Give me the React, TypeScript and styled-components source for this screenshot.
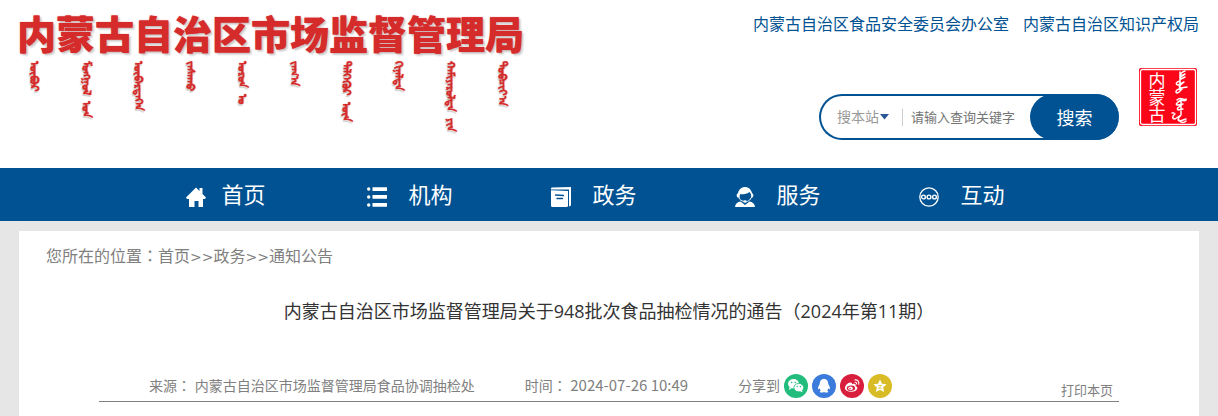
import React from "react";
import styled, { createGlobalStyle } from "styled-components";

const BLUE = "#005293";
const RED = "#d52b2b";

const GlobalStyle = createGlobalStyle`
  *, *::before, *::after { box-sizing: border-box; }
  body {
    margin: 0;
    background: #e6e6e6;
    font-family: "Open Sans", "Noto Sans CJK SC", sans-serif;
    font-size: 14px;
    color: #808080;
  }
  a { color: inherit; text-decoration: none; }
  h1, h2, p, ul { margin: 0; padding: 0; }
`;

const Header = styled.header`
  background: #fff;
`;

const Container = styled.div`
  max-width: 1180px;
  margin: 0 auto;
`;

const HeaderInner = styled(Container)`
  display: flex;
  justify-content: space-between;
  height: 168px;
`;

const Brand = styled.div`
  margin-left: -2px;
  padding-top: 12px;
`;

const BrandName = styled.h1`
  font-family: "Noto Sans CJK SC", sans-serif;
  font-size: 39px;
  line-height: 40px;
  font-weight: 900;
  color: ${RED};
  white-space: nowrap;
  text-shadow: 0 0 1px ${RED}, 2px 2px 2px rgba(0, 0, 0, 0.2);
`;

const MongolianName = styled.p`
  display: flex;
  gap: 32px;
  padding: 9px 0 0 8px;
  color: ${RED};
  font-size: 11px;
  line-height: 20px;
  font-weight: 700;
  text-shadow: 0 0 1px ${RED}, 2px 1px 1px rgba(0, 0, 0, 0.2);

  span { writing-mode: vertical-lr; white-space: pre; }
`;

const HeaderSide = styled.div`
  display: flex;
  flex-direction: column;
  align-items: flex-end;
  padding-top: 12px;
`;

const SiteLinks = styled.nav`
  display: flex;
  gap: 14px;
  font-size: 16px;
  line-height: 24px;
  color: ${BLUE};
`;

const SearchRow = styled.div`
  display: flex;
  align-items: flex-start;
  gap: 20px;
  padding: 32px 2px 0 0;
`;

const SearchForm = styled.form`
  display: flex;
  align-items: center;
  width: 300px;
  height: 46px;
  margin-top: 26px;
  padding-left: 16px;
  border: 2px solid ${BLUE};
  border-right: 0;
  border-radius: 23px;
  background: #fff;
`;

const Scope = styled.label`
  display: flex;
  align-items: center;
  width: 66px;
  flex: none;
  border-right: 1px solid #ccc;
  height: 17px;
`;

const ScopeSelect = styled.select`
  appearance: none;
  border: 0;
  padding: 0;
  background: none;
  color: #999;
  font-family: inherit;
  font-size: 14px;
  line-height: 20px;
  width: 43px;
`;

const Keyword = styled.input`
  flex: 1;
  min-width: 0;
  border: 0;
  padding: 0 0 0 8px;
  background: none;
  font-family: inherit;
  font-size: 13px;
  line-height: 20px;
  outline: none;

  &::placeholder { color: #757575; opacity: 1; }
`;

const SearchButton = styled.button`
  flex: none;
  width: 89px;
  height: 46px;
  border: 0;
  border-radius: 23px;
  background: ${BLUE};
  color: #fff;
  font-family: inherit;
  font-size: 18px;
`;

const Seal = styled.svg`
  display: block;
  flex: none;
`;

const SealText = styled.text`
  writing-mode: vertical-rl;
  font-family: "Noto Sans CJK SC", sans-serif;
  font-size: 17px;
  fill: #fff;
`;

const NavBar = styled.nav`
  background: ${BLUE};
`;

const NavList = styled.ul`
  display: flex;
  max-width: 1180px;
  margin: 0 auto;
  padding-left: 115px;
  list-style: none;
`;

const NavItem = styled.li`
  width: 184px;
`;

const NavLink = styled.a<{ $gap: number }>`
  display: flex;
  align-items: center;
  justify-content: center;
  gap: ${(p) => p.$gap}px;
  height: 53px;
  padding-bottom: 2px;
  color: #fff;
  font-size: 22px;
  line-height: 32px;

  svg { flex: none; margin-top: 6px; }
`;

const Card = styled.main`
  max-width: 1180px;
  min-height: 200px;
  margin: 10px auto 0;
  padding: 12px 80px 0;
  background: #fff;
`;

const Breadcrumb = styled.nav`
  margin-left: -53px;
  font-size: 16px;
  line-height: 24px;
`;

const Separator = styled.span`
  font-family: "DejaVu Sans", sans-serif;
  font-size: 14px;
`;

const Colon = styled.span`
  font-family: "Noto Sans CJK TC", sans-serif;
`;

const ArticleTitle = styled.h2`
  margin-top: 29px;
  font-size: 18px;
  line-height: 26px;
  font-weight: 400;
  color: #333;
  text-align: center;
`;

const MetaRow = styled.div`
  display: flex;
  align-items: center;
  height: 31px;
  margin-top: 47px;
  padding: 0 6px 0 50px;
  border-bottom: 1px solid #808080;
  line-height: 20px;
  white-space: nowrap;
`;

const MetaItem = styled.span`
  margin-right: 50px;
  padding-bottom: 2px;
`;

const PublishTime = styled.time`
  font-family: "Noto Sans CJK SC", sans-serif;
  font-size: 15px;
`;

const Share = styled.div`
  display: flex;
  align-items: center;
  gap: 4px;
`;

const ShareLink = styled.a`
  display: block;
  height: 24px;

  svg { display: block; }
`;

const PrintButton = styled.button`
  margin: 8px 0 0 auto;
  border: 0;
  padding: 0;
  background: none;
  color: inherit;
  font-family: inherit;
  font-size: 13px;
  line-height: 20px;
`;

const mongolianWords = [
  "ᠥᠪᠥᠷ",
  "ᠮᠣᠩᠭᠣᠯ  ᠤᠨ",
  "ᠥᠪᠡᠷᠲᠡᠭᠡᠨ",
  "ᠵᠠᠰᠠᠬᠤ",
  "ᠣᠷᠣᠨ  ᠤ",
  "ᠵᠠᠬ᠎ᠠ",
  "ᠳᠡᠯᠭᠡᠭᠦᠷ  ᠦᠨ",
  "ᠬᠢᠨᠠᠯᠲᠠ",
  "ᠬᠠᠮᠢᠶᠠᠷᠤᠯᠲᠠ  ᠶᠢᠨ",
  "ᠲᠣᠪᠴᠢᠶ᠎ᠠ",
];

const HomeIcon = () => (
  <svg width="20" height="20" viewBox="0 0 20 20" fill="#fff" aria-hidden="true">
    <path d="M10 0.5 13.500 4V1h3v6L20 10.500 19 12h-2v8h-4.500v-6h-4v6H3v-8H1L0 10.500Z" />
  </svg>
);

const ListIcon = () => (
  <svg width="20" height="20" viewBox="0 0 20 20" fill="#fff" aria-hidden="true">
    <circle cx="1.700" cy="2" r="1.700" />
    <circle cx="1.700" cy="10" r="1.700" />
    <circle cx="1.700" cy="18" r="1.700" />
    <path d="M5.500 0.300H20v3.700H5.500ZM5.500 8.100H20v3.700H5.500ZM5.500 16.100H20v3.700H5.500Z" />
  </svg>
);

const DocumentIcon = () => (
  <svg width="20" height="20" viewBox="0 0 20 20" aria-hidden="true">
    <path d="M1 .5 20 0v18.500l-2 1V2.500H0V1.500Q0 .5 1 .5Z" fill="#fff" />
    <path d="M0 3.200 17 4v14.500Q17 20 15.500 20H1.500Q0 20 0 18.500Z" fill="#fff" />
    <path d="M4.500 8l8 .5M6 11.500h5.500" stroke={BLUE} strokeWidth="1.300" strokeLinecap="round" />
  </svg>
);

const ServiceIcon = () => (
  <svg width="20" height="20" viewBox="0 0 20 20" aria-hidden="true">
    <path d="M2.500 10.500C1 9 1.500 7 3 6c1-4 4-6 7-6s6 2 7 6c1.500 1 2 3 .5 4.500L16 11c.5-2.500 0-4.500-1.500-6-3 2.200-6 2.500-9.500 2.300-.5 1.200-.4 2.500-.1 3.700Z" fill="#fff" />
    <path d="M4 11c1 2 2.500 3 4.500 3.200" fill="none" stroke="#fff" strokeWidth="1" />
    <path d="M16.300 10.500c-1 2.300-2.300 3.300-4 3.800" fill="none" stroke="#fff" strokeWidth="1" />
    <path d="M0 20c.3-3.500 2.500-5 5.500-5.500L10 18l4.500-3.500c3 .5 5.200 2 5.500 5.500Z" fill="#fff" />
    <ellipse cx="10" cy="14.500" rx="1.800" ry="1.200" fill="#fff" />
  </svg>
);

const InteractIcon = () => (
  <svg width="20" height="20" viewBox="0 0 20 20" fill="none" stroke="#fff" aria-hidden="true">
    <circle cx="10" cy="10" r="9.200" strokeWidth="1.300" />
    <circle cx="4.500" cy="10" r="1.900" strokeWidth="1.400" />
    <circle cx="10" cy="10" r="1.900" strokeWidth="1.400" />
    <circle cx="15.500" cy="10" r="1.900" strokeWidth="1.400" />
  </svg>
);

const navItems = [
  { label: "首页", icon: <HomeIcon />, gap: 15 },
  { label: "机构", icon: <ListIcon />, gap: 21 },
  { label: "政务", icon: <DocumentIcon />, gap: 21 },
  { label: "服务", icon: <ServiceIcon />, gap: 21 },
  { label: "互动", icon: <InteractIcon />, gap: 21 },
];

const shareItems = [
  {
    name: "微信",
    color: "#22bd7c",
    art: (
      <>
        <ellipse cx="9.500" cy="9.800" rx="5.500" ry="4.700" fill="#fff" />
        <path d="M5.500 13 5 16l3-2Z" fill="#fff" />
        <ellipse cx="14.800" cy="13.600" rx="4.900" ry="4.200" fill="#fff" stroke="#22bd7c" strokeWidth=".8" />
        <path d="m16 17 2.500 1.500-.5-2.500Z" fill="#fff" />
        <g fill="#22bd7c">
          <circle cx="7.700" cy="8.500" r=".8" />
          <circle cx="11.300" cy="8.500" r=".8" />
          <circle cx="13.200" cy="12.500" r=".7" />
          <circle cx="16.400" cy="12.500" r=".7" />
        </g>
      </>
    ),
  },
  {
    name: "QQ",
    color: "#3b7bdc",
    art: (
      <path
        d="M12 5c-3 0-4.300 2.200-4.200 5-.9 1.400-2 3.200-1.700 5 .4.700 1 0 1.500-.7.200 1 .7 1.700 1.300 2.200-.8.300-1.300.8-1 1.400.5.900 3.200.7 4.100 0 .9.700 3.600.9 4.100 0 .3-.6-.2-1.100-1-1.400.6-.5 1.100-1.200 1.300-2.200.5.700 1.100 1.400 1.500.7.300-1.800-.8-3.600-1.700-5C16.300 7.200 15 5 12 5Z"
        fill="#fff"
      />
    ),
  },
  {
    name: "微博",
    color: "#d81e3c",
    art: (
      <>
        <path
          d="M10.500 8.500C8 8.300 4.500 12 5 14.500c.5 2.700 4.500 3.700 7.500 3.200 3-.5 5.300-2.500 4.800-4.300-.2-.9-1.300-1.200-1.700-1.500.4-2-.9-2.600-3.600-1.600.3-1 0-1.700-1.500-1.800Z"
          fill="#fff"
        />
        <ellipse cx="10.900" cy="14.200" rx="4.200" ry="2.700" fill="#d81e3c" transform="rotate(-8 11 14)" />
        <ellipse cx="10.500" cy="14.400" rx="2.300" ry="1.800" fill="#fff" />
        <circle cx="10" cy="14.800" r=".8" fill="#d81e3c" />
        <path d="M14.500 6c3-.6 5 1.700 4.200 4.600M14.700 8.300c1.300-.2 2.200.7 1.900 2" fill="none" stroke="#fff" strokeWidth="1.100" />
      </>
    ),
  },
  {
    name: "QQ空间",
    color: "#d8bb25",
    art: (
      <>
        <path d="m12 5.500 2 4.300 4.600.5-3.400 3.200.9 4.600-4.100-2.300-4.100 2.300.9-4.600-3.400-3.200 4.600-.5Z" fill="#fff" />
        <path d="M10 11.500h3.500l-3 2.700h3.500" fill="none" stroke="#d8bb25" strokeWidth=".7" />
      </>
    ),
  },
];

export default function App() {
  return (
    <>
      <GlobalStyle />
      <Header>
        <HeaderInner>
          <Brand>
            <BrandName>内蒙古自治区市场监督管理局</BrandName>
            <MongolianName lang="mn-Mong">
              {mongolianWords.map((word) => (
                <span key={word}>{word}</span>
              ))}
            </MongolianName>
          </Brand>
          <HeaderSide>
            <SiteLinks>
              <a href="#food-safety">内蒙古自治区食品安全委员会办公室</a>
              <a href="#ip-office">内蒙古自治区知识产权局</a>
            </SiteLinks>
            <SearchRow>
              <SearchForm onSubmit={(e) => e.preventDefault()}>
                <Scope>
                  <ScopeSelect aria-label="搜索范围">
                    <option>搜本站</option>
                  </ScopeSelect>
                  <svg width="9" height="6" viewBox="0 0 9 6" aria-hidden="true">
                    <path d="M0 0h9L4.500 5.500Z" fill="#2b5797" />
                  </svg>
                </Scope>
                <Keyword aria-label="查询关键字" placeholder="请输入查询关键字" />
                <SearchButton type="submit">搜索</SearchButton>
              </SearchForm>
              <Seal width="58" height="58" viewBox="0 0 58 58" role="img" aria-label="内蒙古">
                <rect width="58" height="58" rx="2" fill="#fb0519" />
                <rect x="1.500" y="1.500" width="55" height="55" rx="2" fill="none" stroke="#fff" strokeWidth="1.300" />
                <SealText x="18" y="4">内蒙古</SealText>
                <g fill="none" stroke="#fff" strokeWidth="1.500" strokeLinecap="round" strokeLinejoin="round">
                  <path d="M46 3c-3 1-5 3-4 4s3-1 4-1c-5 3-6 4-4 5l4-2M41 4v18M41 13c-4 1-5 3-2 4l6-3c-5 4-6 5-3 6l6-1M40 21c-3 1-4 3-2 4 3 0 3-3 5-4" />
                  <path d="M38 32c4-4 6 1 9-1 1 2-2 2-5 1M42 32c-5 3-6 5-3 5l5-1c-4 3-7 4-5 6l5-1M42 32v14M33 45l2 0M36 46c-3 2-3 5 0 5l6-4c-3 3-4 6-1 6l6-2M40 52c2 3 5 3 7 1" />
                </g>
              </Seal>
            </SearchRow>
          </HeaderSide>
        </HeaderInner>
      </Header>
      <NavBar aria-label="主导航">
        <NavList>
          {navItems.map((item) => (
            <NavItem key={item.label}>
              <NavLink href="#" $gap={item.gap}>
                {item.icon}
                <span>{item.label}</span>
              </NavLink>
            </NavItem>
          ))}
        </NavList>
      </NavBar>
      <Card>
        <Breadcrumb aria-label="当前位置">
          您所在的位置<Colon>：</Colon>
          <a href="#home">首页</a>
          <Separator>&gt;&gt;</Separator>
          <a href="#affairs">政务</a>
          <Separator>&gt;&gt;</Separator>
          <a href="#notices">通知公告</a>
        </Breadcrumb>
        <ArticleTitle>内蒙古自治区市场监督管理局关于948批次食品抽检情况的通告（2024年第11期）</ArticleTitle>
        <MetaRow>
          <MetaItem>
            来源<Colon>：</Colon> 内蒙古自治区市场监督管理局食品协调抽检处
          </MetaItem>
          <MetaItem>
            时间<Colon>：</Colon> <PublishTime dateTime="2024-07-26T10:49">2024-07-26 10:49</PublishTime>
          </MetaItem>
          <Share>
            <span>分享到</span>
            {shareItems.map((item) => (
              <ShareLink key={item.name} href="#share" aria-label={item.name}>
                <svg width="24" height="24" viewBox="0 0 24 24" aria-hidden="true">
                  <circle cx="12" cy="12" r="12" fill={item.color} />
                  {item.art}
                </svg>
              </ShareLink>
            ))}
          </Share>
          <PrintButton type="button">打印本页</PrintButton>
        </MetaRow>
      </Card>
    </>
  );
}
